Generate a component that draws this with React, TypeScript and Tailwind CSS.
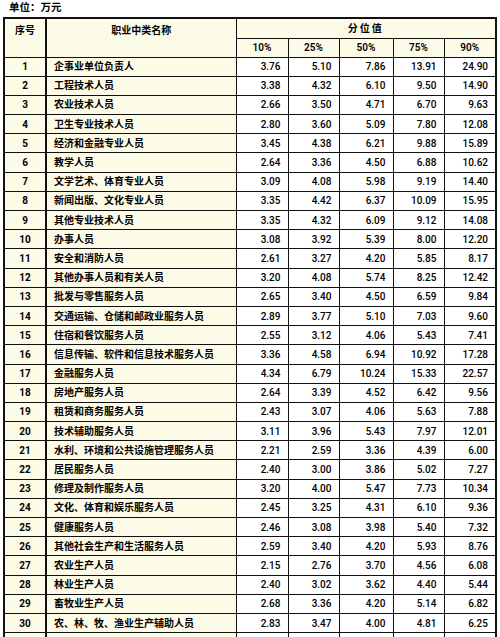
const rows: [string, string, string, string, string, string][] = [
  ['企事业单位负责人', '3.76', '5.10', '7.86', '13.91', '24.90'],
  ['工程技术人员', '3.38', '4.32', '6.10', '9.50', '14.90'],
  ['农业技术人员', '2.66', '3.50', '4.71', '6.70', '9.63'],
  ['卫生专业技术人员', '2.80', '3.60', '5.09', '7.80', '12.08'],
  ['经济和金融专业人员', '3.45', '4.38', '6.21', '9.88', '15.89'],
  ['教学人员', '2.64', '3.36', '4.50', '6.88', '10.62'],
  ['文学艺术、体育专业人员', '3.09', '4.08', '5.98', '9.19', '14.40'],
  ['新闻出版、文化专业人员', '3.35', '4.42', '6.37', '10.09', '15.95'],
  ['其他专业技术人员', '3.35', '4.32', '6.09', '9.12', '14.08'],
  ['办事人员', '3.08', '3.92', '5.39', '8.00', '12.20'],
  ['安全和消防人员', '2.61', '3.27', '4.20', '5.85', '8.17'],
  ['其他办事人员和有关人员', '3.20', '4.08', '5.74', '8.25', '12.42'],
  ['批发与零售服务人员', '2.65', '3.40', '4.50', '6.59', '9.84'],
  ['交通运输、仓储和邮政业服务人员', '2.89', '3.77', '5.10', '7.03', '9.60'],
  ['住宿和餐饮服务人员', '2.55', '3.12', '4.06', '5.43', '7.41'],
  ['信息传输、软件和信息技术服务人员', '3.36', '4.58', '6.94', '10.92', '17.28'],
  ['金融服务人员', '4.34', '6.79', '10.24', '15.33', '22.57'],
  ['房地产服务人员', '2.64', '3.39', '4.52', '6.42', '9.56'],
  ['租赁和商务服务人员', '2.43', '3.07', '4.06', '5.63', '7.88'],
  ['技术辅助服务人员', '3.11', '3.96', '5.43', '7.97', '12.01'],
  ['水利、环境和公共设施管理服务人员', '2.21', '2.59', '3.36', '4.39', '6.00'],
  ['居民服务人员', '2.40', '3.00', '3.86', '5.02', '7.27'],
  ['修理及制作服务人员', '3.20', '4.00', '5.47', '7.73', '10.34'],
  ['文化、体育和娱乐服务人员', '2.45', '3.25', '4.31', '6.10', '9.36'],
  ['健康服务人员', '2.46', '3.08', '3.98', '5.40', '7.32'],
  ['其他社会生产和生活服务人员', '2.59', '3.40', '4.20', '5.93', '8.76'],
  ['农业生产人员', '2.15', '2.76', '3.70', '4.56', '6.08'],
  ['林业生产人员', '2.40', '3.02', '3.62', '4.40', '5.44'],
  ['畜牧业生产人员', '2.68', '3.36', '4.20', '5.14', '6.82'],
  ['农、林、牧、渔业生产辅助人员', '2.83', '3.47', '4.00', '4.81', '6.25'],
]

const cell = 'border border-[#111] p-0'
const cream = 'bg-[#fcfbe8]'

export default function App() {
  return (
    <div className="min-h-[637px] bg-white font-['Roboto','Noto_Sans_CJK_SC',sans-serif] text-[10px] text-black">
      <div className="pl-[9px] pt-[1px] h-[16px] text-[10.5px] font-bold leading-[14px]">单位：万元</div>
      <table className="ml-[3px] mt-[1px] w-[492px] table-fixed border-collapse border-2 border-[#111]">
        <colgroup>
          <col className="w-[42px]" />
          <col className="w-[190px]" />
          <col className="w-[52px]" />
          <col className="w-[51px]" />
          <col className="w-[54px]" />
          <col className="w-[51px]" />
          <col className="w-[52px]" />
        </colgroup>
        <thead className="font-bold">
          <tr className="h-[20px]">
            <th rowSpan={2} className={`${cell} ${cream} border-r-2 align-top pt-[4px]`}>序号</th>
            <th rowSpan={2} className={`${cell} ${cream} align-top pt-[4px]`}>职业中类名称</th>
            <th colSpan={5} className={`${cell} ${cream} tracking-[2px]`}>分位值</th>
          </tr>
          <tr className="h-[19px]">
            {['10%', '25%', '50%', '75%', '90%'].map(p => (
              <th key={p} className={`${cell} ${cream} font-semibold`}>{p}</th>
            ))}
          </tr>
        </thead>
        <tbody className="font-medium">
          {rows.map((r, i) => (
            <tr key={i} className="h-[19.2px]">
              <td className={`${cell} ${cream} border-r-2 text-center font-bold`}>{i + 1}</td>
              <td className={`${cell} ${cream} pl-[7px] font-bold`}>{r[0]}</td>
              {r.slice(1).map((v, j) => (
                <td key={j} className={`${cell} bg-white text-right pr-[7px]`}>{v}</td>
              ))}
            </tr>
          ))}
          <tr className="h-[19.2px]">
            <td className={`${cell} ${cream} border-r-2`}></td>
            <td className={`${cell} ${cream}`}></td>
            <td className={cell}></td>
            <td className={cell}></td>
            <td className={cell}></td>
            <td className={cell}></td>
            <td className={cell}></td>
          </tr>
        </tbody>
      </table>
    </div>
  )
}
